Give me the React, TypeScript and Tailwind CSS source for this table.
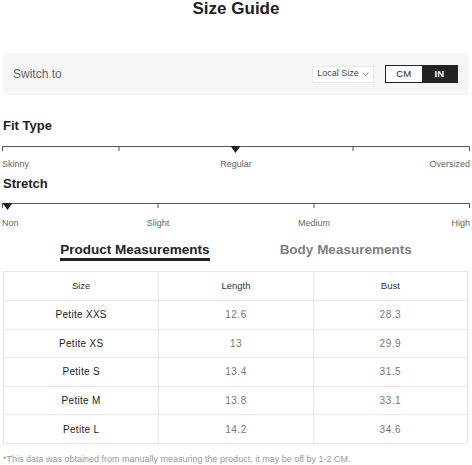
const ROWS = [
  { size: 'Petite XXS', length: '12.6', bust: '28.3' },
  { size: 'Petite XS', length: '13', bust: '29.9' },
  { size: 'Petite S', length: '13.4', bust: '31.5' },
  { size: 'Petite M', length: '13.8', bust: '33.1' },
  { size: 'Petite L', length: '14.2', bust: '34.6' },
]

function Scale({ ticks, marker }: { ticks: number[]; marker: number }) {
  return (
    <svg width="468" height="8" viewBox="0 0 468 8" className="block">
      <line x1="0" y1="0.5" x2="468" y2="0.5" stroke="#555" strokeWidth="1" />
      {ticks.map((x) => (
        <line key={x} x1={x} y1="0" x2={x} y2="5" stroke="#555" strokeWidth="1" />
      ))}
      <polygon points={`${marker - 5},0 ${marker + 5},0 ${marker},7`} fill="#222" />
    </svg>
  )
}

export default function App() {
  return (
    <div className="w-[472px] bg-white text-[#222]" style={{ fontFamily: '"Liberation Sans", Arial, sans-serif' }}>
      <h1 className="text-center text-[17px] leading-[17px] font-bold">Size Guide</h1>

      <div className="mt-[36px] mx-[3px] h-[42px] bg-[#f6f6f6] flex items-center justify-between pl-[10px] pr-[11px]">
        <span className="text-[12px] text-[#666]">Switch to</span>
        <div className="flex items-center gap-[11px]">
          <div className="w-[62px] h-[17px] bg-white border border-[#e8e8e8] flex items-center justify-center gap-[3px] text-[9px] text-[#444]">
            Local Size
            <svg width="7" height="4" viewBox="0 0 7 4">
              <path d="M0.5 0.5 L3.5 3.5 L6.5 0.5" fill="none" stroke="#666" strokeWidth="0.8" />
            </svg>
          </div>
          <div className="w-[73px] h-[18px] border border-[#222] flex text-[9.5px]">
            <span className="w-1/2 flex items-center justify-center bg-white text-[#222]">CM</span>
            <span className="w-1/2 flex items-center justify-center bg-[#222] text-white font-bold">IN</span>
          </div>
        </div>
      </div>

      <div className="mt-[23px] px-[3px] text-[13px] leading-[16px] font-bold">Fit Type</div>
      <div className="mt-[12px] mx-[2px]">
        <Scale ticks={[0.5, 117, 351, 467.5]} marker={233.5} />
        <div className="mt-[4px] grid grid-cols-3 text-[9px] leading-[12px] text-[#666]">
          <span className="text-left">Skinny</span>
          <span className="text-center">Regular</span>
          <span className="text-right">Oversized</span>
        </div>
      </div>

      <div className="mt-[6px] px-[3px] text-[13px] leading-[16px] font-bold">Stretch</div>
      <div className="mt-[11px] mx-[2px]">
        <Scale ticks={[0.5, 156, 312, 467.5]} marker={5.5} />
        <div className="mt-[6px] grid grid-cols-[1fr_2fr_2fr_1fr] text-[9px] leading-[12px] text-[#666]">
          <span className="text-left">Non</span>
          <span className="text-center">Slight</span>
          <span className="text-center">Medium</span>
          <span className="text-right">High</span>
        </div>
      </div>

      <div className="mt-[13px] flex justify-center gap-[70px] text-[13.5px] leading-[16px] font-bold">
        <span className="border-b-[3px] border-[#222] text-[#222]">Product Measurements</span>
        <span className="text-[#808080]">Body Measurements</span>
      </div>

      <div className="mt-[10px] mx-[3px] w-[465px] border border-[#e6e6e6]">
        <div className="grid grid-cols-3 h-[28px] items-center text-center text-[9.5px] text-[#333]">
          <span>Size</span>
          <span className="h-full flex items-center justify-center border-l border-[#e6e6e6]">Length</span>
          <span className="h-full flex items-center justify-center border-l border-[#e6e6e6]">Bust</span>
        </div>
        {ROWS.map((r) => (
          <div key={r.size} className="grid grid-cols-3 h-[28.6px] border-t border-[#e6e6e6] text-center text-[10px]">
            <span className="flex items-center justify-center font-medium text-[#222] tracking-[0.3px]">{r.size}</span>
            <span className="flex items-center justify-center border-l border-[#e6e6e6] text-[#777] tracking-[0.5px]">{r.length}</span>
            <span className="flex items-center justify-center border-l border-[#e6e6e6] text-[#777] tracking-[0.5px]">{r.bust}</span>
          </div>
        ))}
      </div>

      <p className="mt-[9px] px-[3px] text-[9px] leading-[12px] text-[#999]">
        *This data was obtained from manually measuring the product, it may be off by 1-2 CM.
      </p>
    </div>
  )
}
